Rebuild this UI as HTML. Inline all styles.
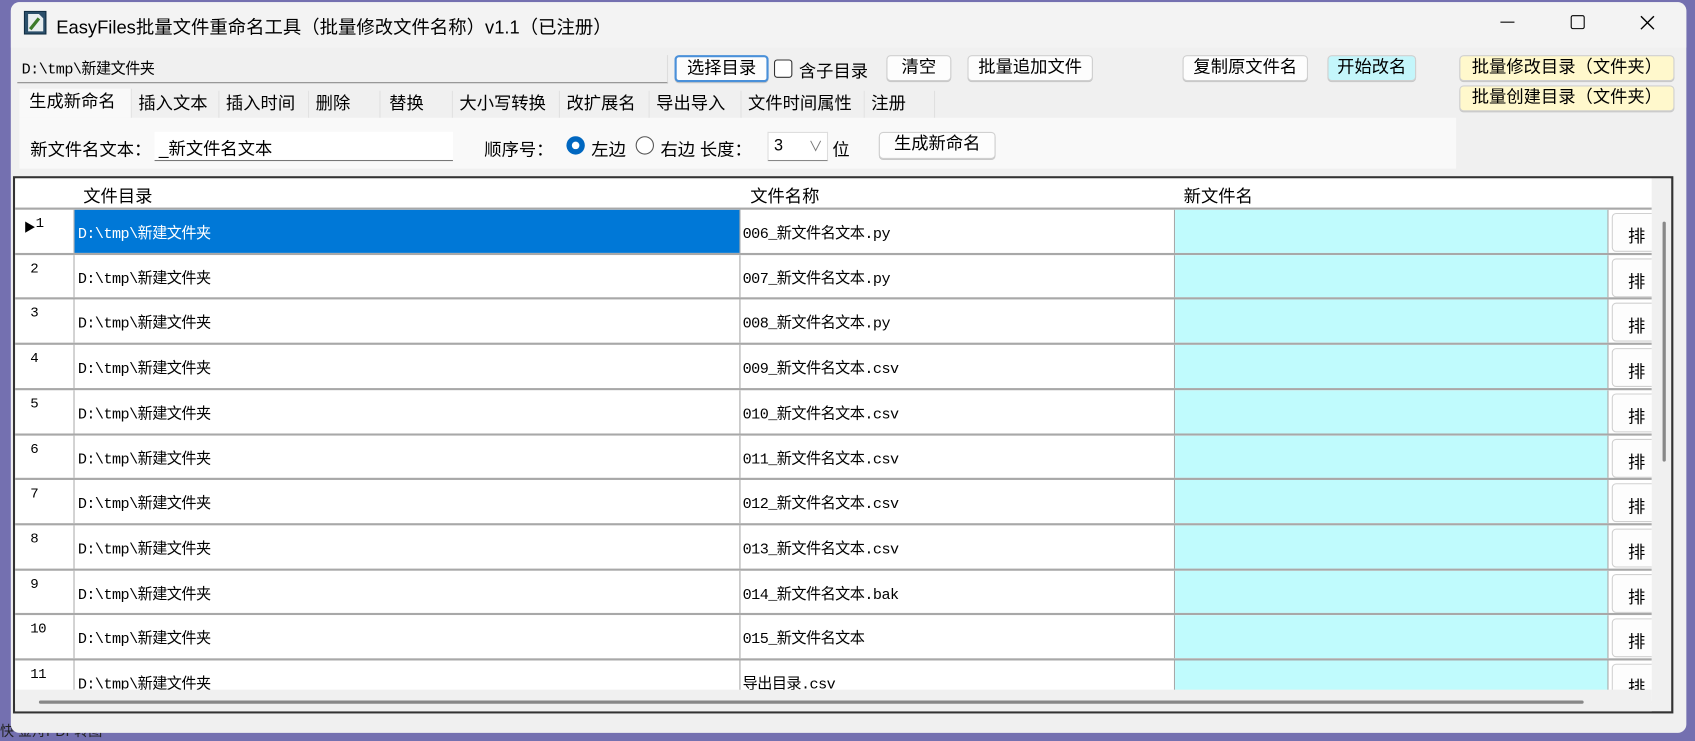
<!DOCTYPE html>
<html><head><meta charset="utf-8"><style>
*{box-sizing:border-box;margin:0;padding:0}
html,body{width:1695px;height:741px;overflow:hidden;background:#7470b0}
#s{position:absolute;left:0;top:0;width:1568px;height:685px;transform:scale(1.08099);transform-origin:0 0;font-family:"Liberation Sans","Noto Sans CJK SC",sans-serif;font-size:16px;color:#000}
.a{position:absolute;white-space:nowrap}
.btn{position:absolute;background:#fdfdfd;border:1px solid #d0d0d0;border-radius:4px;text-align:center;font-size:16px;line-height:22px;box-shadow:0 1px 0 #c8c8c8}
.tab{position:absolute;top:84px;height:25px;line-height:25px;font-size:16px;padding-left:6px;background:#f0f0f0;border-right:1px solid #e0e0e0}
.m{font-family:"Liberation Mono","Noto Sans CJK SC",monospace;font-size:14px;letter-spacing:-0.5px}
</style></head><body><div id="s">
<div class="a" style="left:0;top:666px;font-size:13px;color:#222">快 金舟PDF转图</div>
<div class="a" style="left:10px;top:2px;width:1550px;height:676px;background:#f0f0f0;border-radius:8px;overflow:hidden">
 <div class="a" style="left:0;top:0;width:1550px;height:42px;background:#f3f3f3"></div>
</div>
<svg class="a" style="left:22px;top:10px" width="21" height="22"><rect x="0.5" y="0.5" width="20" height="21" fill="#2b4f6a" stroke="#0e2a3f"/><path d="M4 3h10l4 4v12H4z" fill="#e8eef0"/><path d="M6 17l8-10" stroke="#3b7a2a" stroke-width="3"/></svg>
<div class="a" style="left:52px;top:11px;font-size:17px">EasyFiles批量文件重命名工具（批量修改文件名称）v1.1（已注册）</div>
<div class="a" style="left:1388px;top:20px;width:13px;height:1px;background:#000"></div>
<div class="a" style="left:1453px;top:14px;width:13px;height:13px;border:1.5px solid #000;border-radius:2px"></div>
<svg class="a" style="left:1517px;top:14px" width="14" height="14"><path d="M1 1L13 13M13 1L1 13" stroke="#000" stroke-width="1.3"/></svg>

<div class="a m" style="left:16px;top:51px;width:602px;height:26px;background:#f0f0f0;border-bottom:1px solid #888;border-right:1px solid #ddd;padding:2px 4px;font-size:14px">D:\tmp\新建文件夹</div>
<div class="btn" style="left:624px;top:51px;width:87px;height:25px;border:2px solid #4a90d9">选择目录</div>
<div class="a" style="left:716px;top:55px;width:17px;height:17px;border:1.5px solid #333;border-radius:3px;background:#fff"></div>
<div class="a" style="left:739px;top:52px">含子目录</div>
<div class="btn" style="left:820px;top:51px;width:60px;height:24px">清空</div>
<div class="btn" style="left:895px;top:51px;width:116px;height:24px">批量追加文件</div>
<div class="btn" style="left:1094px;top:51px;width:116px;height:24px">复制原文件名</div>
<div class="btn" style="left:1228px;top:51px;width:82px;height:24px;background:#c4f6fb">开始改名</div>
<div class="btn" style="left:1350px;top:51px;width:199px;height:24px;background:#fff8cc">批量修改目录（文件夹）</div>
<div class="btn" style="left:1350px;top:79px;width:199px;height:24px;background:#fff8cc">批量创建目录（文件夹）</div>

<div class="tab" style="left:18px;width:104px;background:#f9f9f9;top:82px;height:27px;line-height:26px;padding-left:9px">生成新命名</div>
<div class="tab" style="left:122px;width:81px">插入文本</div>
<div class="tab" style="left:203px;width:83px">插入时间</div>
<div class="tab" style="left:286px;width:66px">删除</div>
<div class="tab" style="left:352px;width:67px;padding-left:8px">替换</div>
<div class="tab" style="left:419px;width:99px">大小写转换</div>
<div class="tab" style="left:518px;width:83px">改扩展名</div>
<div class="tab" style="left:601px;width:85px">导出导入</div>
<div class="tab" style="left:686px;width:114px">文件时间属性</div>
<div class="tab" style="left:800px;width:65px">注册</div>
<div class="a" style="left:18px;top:109px;width:1329px;height:47px;background:#f9f9f9"></div>
<div class="a" style="left:28px;top:125px">新文件名文本：</div>
<div class="a" style="left:143px;top:122px;width:276px;height:27px;background:#fff;border-bottom:1px solid #777;padding:2px 4px">_新文件名文本</div>
<div class="a" style="left:448px;top:125px">顺序号：</div>
<div class="a" style="left:524px;top:126px;width:17px;height:17px;border-radius:50%;background:#0067c0"><div class="a" style="left:5px;top:5px;width:7px;height:7px;border-radius:50%;background:#fff"></div></div>
<div class="a" style="left:547px;top:125px">左边</div>
<div class="a" style="left:588px;top:126px;width:17px;height:17px;border-radius:50%;border:1.5px solid #555;background:#fff"></div>
<div class="a" style="left:611px;top:125px">右边 长度：</div>
<div class="a" style="left:710px;top:122px;width:56px;height:27px;background:#fff;border:1px solid #ddd;border-bottom:1px solid #888;padding:3px 5px;font-size:15px">3<span style="position:absolute;left:37px;top:2px;color:#777;font-size:13px">∨</span></div>
<div class="a" style="left:770px;top:125px">位</div>
<div class="btn" style="left:813px;top:122px;width:108px;height:25px">生成新命名</div>

<div class="a" style="left:12px;top:163px;width:1536px;height:497px;border:2px solid #333;background:#f0f0f0"></div>
<div class="a" style="left:14px;top:165px;width:1514px;height:27px;background:#fff"></div>
<div class="a" style="left:77px;top:168px">文件目录</div>
<div class="a" style="left:694px;top:168px">文件名称</div>
<div class="a" style="left:1095px;top:168px">新文件名</div>
<div id="rows"></div>
<div class="a" style="left:14px;top:638px;width:1514px;height:20px;background:#f0f0f0"></div>
<div class="a" style="left:36px;top:648px;width:1429px;height:3px;background:#888;border-radius:2px"></div>
<div class="a" style="left:1528px;top:165px;width:17px;height:473px;background:#f0f0f0"></div>
<div class="a" style="left:1538px;top:205px;width:3px;height:222px;background:#888;border-radius:2px"></div>
</div>
<script>
var f=["006_新文件名文本.py","007_新文件名文本.py","008_新文件名文本.py","009_新文件名文本.csv","010_新文件名文本.csv","011_新文件名文本.csv","012_新文件名文本.csv","013_新文件名文本.csv","014_新文件名文本.bak","015_新文件名文本","导出目录.csv"];
var h="";
for(var i=0;i<11;i++){var t=192+i*41.7;var sel=i==0;
h+='<div class="a" style="left:14px;top:'+t+'px;width:1514px;height:42px;border-top:2px solid #a8a8a8;background:#fff;overflow:hidden">'
+'<div class="a" style="left:0;top:0;width:55px;height:40px;border-right:1px solid #a8a8a8"></div>'
+'<div class="a m" style="left:8px;top:5px;font-size:13px">'+(sel?'<span style="font-size:11px;position:absolute;top:3px">▶</span>':'')+'<span style="position:absolute;left:'+(sel?11:6)+'px;top:0">'+(i+1)+'</span></div>'
+'<div class="a m" style="left:55px;top:0;width:616px;height:40px;padding:11px 3px;background:'+(sel?'#0078d7;color:#fff':'#fff')+';border-right:1px solid #a8a8a8">D:\\tmp\\新建文件夹</div>'
+'<div class="a m" style="left:671px;top:0;width:402px;height:40px;padding:11px 2px;border-right:1px solid #a8a8a8">'+f[i]+'</div>'
+'<div class="a" style="left:1073px;top:0;width:401px;height:40px;background:#c0fbfd;border-right:1px solid #a8a8a8"></div>'
+'<div class="a" style="left:1477px;top:3px;width:50px;height:36px;background:#fdfdfd;border:1px solid #d0d0d0;border-radius:4px;padding:7px 0 0 14px">排</div>'
+'</div>';}
document.getElementById("rows").innerHTML=h;
</script>
</body></html>
